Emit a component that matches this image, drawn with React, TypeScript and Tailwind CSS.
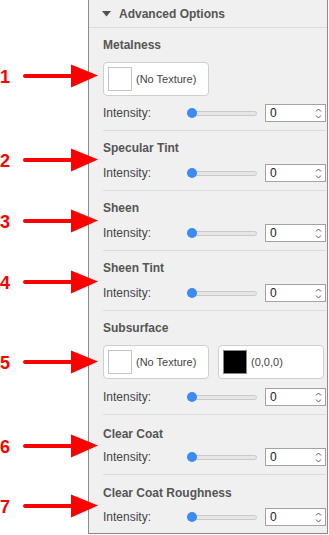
import React from "react";

const arrows = [
  { n: "1", y: 76 },
  { n: "2", y: 160 },
  { n: "3", y: 221 },
  { n: "4", y: 282 },
  { n: "5", y: 362 },
  { n: "6", y: 446 },
  { n: "7", y: 506 },
];

const Spinner = () => (
  <svg width="7" height="13" viewBox="0 0 7 13" className="shrink-0">
    <path d="M1 4.5 L3.5 2 L6 4.5" fill="none" stroke="#555" strokeWidth="1" />
    <path d="M1 8.5 L3.5 11 L6 8.5" fill="none" stroke="#555" strokeWidth="1" />
  </svg>
);

const IntensityRow = ({ className }: { className: string }) => (
  <div className={`flex items-center h-[18px] ${className}`}>
    <span className="w-[84px] text-[12px] leading-[14px] text-[#444]">Intensity:</span>
    <div className="relative w-[70px] h-[5px] rounded-full bg-[#e6e6e6] border border-[#c9c9c9]">
      <div className="absolute left-[-1px] top-1/2 -translate-y-1/2 w-[10px] h-[10px] rounded-full bg-[#3b8bf5]" />
    </div>
    <div className="ml-[8px] w-[61px] h-[18px] border border-[#a3a3a3] bg-white flex items-center justify-between pl-[4px] pr-[3px]">
      <span className="text-[12px] leading-[14px] text-[#222]">0</span>
      <Spinner />
    </div>
  </div>
);

const TextureButton = ({ swatch, label }: { swatch: string; label: string }) => (
  <div className="w-[106px] h-[34px] rounded-[4px] border border-[#cfcfcf] bg-white flex items-center pl-[4px] gap-[4px]">
    <div className={`w-[24px] h-[24px] border ${swatch}`} />
    <span className="text-[11px] leading-[13px] text-[#444]">{label}</span>
  </div>
);

const Section = ({
  title,
  className,
  children,
}: {
  title: string;
  className: string;
  children: React.ReactNode;
}) => (
  <div className={`flex flex-col pb-[8px] ${className}`}>
    <div className="h-[14px] text-[12px] leading-[14px] font-bold text-[#555]">{title}</div>
    {children}
  </div>
);

export default function App() {
  return (
    <div className="relative w-[329px] h-[535px] bg-white overflow-hidden font-['Liberation_Sans',Arial,sans-serif]">
      <div className="ml-[88px] w-[240px] h-[534px] bg-[#f0f0f0] border-x border-b border-[#8c8c8c] flex flex-col">
        <div className="h-[28px] shrink-0 border-b border-[#dcdcdc] flex items-center pl-[13px] gap-[8px]">
          <svg width="9" height="6" viewBox="0 0 9 6">
            <path d="M0 0 H9 L4.5 5.5 Z" fill="#555" />
          </svg>
          <span className="text-[12px] leading-[14px] font-bold text-[#555]">Advanced Options</span>
        </div>

        <div className="ml-[14px] pr-[1px] flex flex-col">
          <Section title="Metalness" className="pt-[10px] border-b border-[#dcdcdc]">
            <div className="mt-[10px]">
              <TextureButton swatch="bg-white border-[#c4c4c4]" label="(No Texture)" />
            </div>
            <IntensityRow className="mt-[8px]" />
          </Section>

          <Section title="Specular Tint" className="pt-[10px] border-b border-[#dcdcdc]">
            <IntensityRow className="mt-[9px]" />
          </Section>

          <Section title="Sheen" className="pt-[10px] border-b border-[#dcdcdc]">
            <IntensityRow className="mt-[9px]" />
          </Section>

          <Section title="Sheen Tint" className="pt-[10px] border-b border-[#dcdcdc]">
            <IntensityRow className="mt-[9px]" />
          </Section>

          <Section title="Subsurface" className="pt-[10px] border-b border-[#dcdcdc]">
            <div className="mt-[10px] flex gap-[9px]">
              <TextureButton swatch="bg-white border-[#c4c4c4]" label="(No Texture)" />
              <TextureButton swatch="bg-black border-[#888]" label="(0,0,0)" />
            </div>
            <IntensityRow className="mt-[9px]" />
          </Section>

          <Section title="Clear Coat" className="pt-[12px] border-b border-[#dcdcdc]">
            <IntensityRow className="mt-[7px]" />
          </Section>

          <Section title="Clear Coat Roughness" className="pt-[11px]">
            <IntensityRow className="mt-[8px]" />
          </Section>
        </div>
      </div>

      {/* annotation arrows drawn over the page */}
      <div className="absolute left-0 top-0 w-[100px] h-[535px] pointer-events-none">
        <svg width="100" height="535" viewBox="0 0 100 535" className="absolute left-0 top-0">
          {arrows.map((a) => (
            <g key={a.n}>
              <line x1="25" y1={a.y} x2="73" y2={a.y} stroke="#ff0000" strokeWidth="4" strokeLinecap="round" />
              <polygon points={`71,${a.y - 11.5} 98,${a.y - 0.5} 71,${a.y + 11.5}`} fill="#ff0000" />
            </g>
          ))}
        </svg>
        {arrows.map((a) => (
          <span
            key={a.n}
            className="absolute left-0 text-[18px] leading-[18px] font-bold text-[#f00]"
            style={{ top: a.y - 8 }}
          >
            {a.n}
          </span>
        ))}
      </div>
    </div>
  );
}
